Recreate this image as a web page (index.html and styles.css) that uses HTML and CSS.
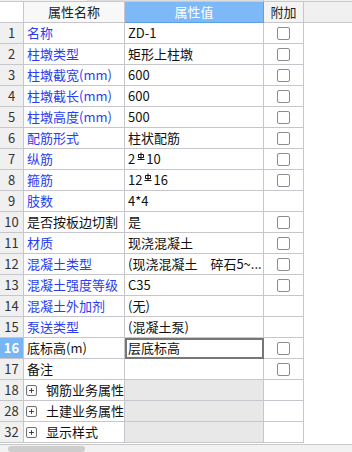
FILE: index.html
```html
<!DOCTYPE html>
<html>
<head>
<meta charset="utf-8">
<link rel="stylesheet" href="styles.css">
</head>
<body>
<div class="app">
  <div class="topstrip"><span class="ts-a"></span><span class="ts-b"></span><span class="ts-c"></span></div>
  <div class="grid">
    <div class="row head">
      <div class="c num hnum"></div>
      <div class="c name hname">属性名称</div>
      <div class="c val hval">属性值</div>
      <div class="c add hadd">附加</div>
      <div class="fill hfill"></div>
    </div>
    <div class="row"><div class="c num">1</div><div class="c name blue">名称</div><div class="c val">ZD-1</div><div class="c add"><span class="cb"></span></div><div class="fill"></div></div>
    <div class="row"><div class="c num">2</div><div class="c name blue">柱墩类型</div><div class="c val">矩形上柱墩</div><div class="c add"><span class="cb"></span></div><div class="fill"></div></div>
    <div class="row"><div class="c num">3</div><div class="c name blue">柱墩截宽(mm)</div><div class="c val">600</div><div class="c add"><span class="cb"></span></div><div class="fill"></div></div>
    <div class="row"><div class="c num">4</div><div class="c name blue">柱墩截长(mm)</div><div class="c val">600</div><div class="c add"><span class="cb"></span></div><div class="fill"></div></div>
    <div class="row"><div class="c num">5</div><div class="c name blue">柱墩高度(mm)</div><div class="c val">500</div><div class="c add"><span class="cb"></span></div><div class="fill"></div></div>
    <div class="row"><div class="c num">6</div><div class="c name blue">配筋形式</div><div class="c val">柱状配筋</div><div class="c add"><span class="cb"></span></div><div class="fill"></div></div>
    <div class="row"><div class="c num">7</div><div class="c name blue">纵筋</div><div class="c val">2<svg class="rb" width="8" height="9" viewBox="0 0 8 9"><path d="M4 0.5V7.5M1.5 2.5H6.5V5.5H1.5Z M0.5 7.5H7.5" fill="none" stroke="#111" stroke-width="1"/></svg>10</div><div class="c add"><span class="cb"></span></div><div class="fill"></div></div>
    <div class="row"><div class="c num">8</div><div class="c name blue">箍筋</div><div class="c val">12<svg class="rb" width="8" height="9" viewBox="0 0 8 9"><path d="M4 0.5V7.5M1.5 2.5H6.5V5.5H1.5Z M0.5 7.5H7.5" fill="none" stroke="#111" stroke-width="1"/></svg>16</div><div class="c add"><span class="cb"></span></div><div class="fill"></div></div>
    <div class="row"><div class="c num">9</div><div class="c name blue">肢数</div><div class="c val">4*4</div><div class="c add"></div><div class="fill"></div></div>
    <div class="row"><div class="c num">10</div><div class="c name">是否按板边切割</div><div class="c val">是</div><div class="c add"><span class="cb"></span></div><div class="fill"></div></div>
    <div class="row"><div class="c num">11</div><div class="c name blue">材质</div><div class="c val">现浇混凝土</div><div class="c add"><span class="cb"></span></div><div class="fill"></div></div>
    <div class="row"><div class="c num">12</div><div class="c name blue">混凝土类型</div><div class="c val">(现浇混凝土　碎石5~...</div><div class="c add"><span class="cb"></span></div><div class="fill"></div></div>
    <div class="row"><div class="c num">13</div><div class="c name blue">混凝土强度等级</div><div class="c val">C35</div><div class="c add"><span class="cb"></span></div><div class="fill"></div></div>
    <div class="row"><div class="c num">14</div><div class="c name blue">混凝土外加剂</div><div class="c val">(无)</div><div class="c add"></div><div class="fill"></div></div>
    <div class="row"><div class="c num">15</div><div class="c name blue">泵送类型</div><div class="c val">(混凝土泵)</div><div class="c add"></div><div class="fill"></div></div>
    <div class="row"><div class="c num sel">16</div><div class="c name">底标高(m)</div><div class="c val edit">层底标高</div><div class="c add"><span class="cb"></span></div><div class="fill"></div></div>
    <div class="row"><div class="c num">17</div><div class="c name">备注</div><div class="c val"></div><div class="c add"><span class="cb"></span></div><div class="fill"></div></div>
    <div class="row"><div class="c num">18</div><div class="c name"><span class="exp"><svg width="11" height="11" viewBox="0 0 11 11"><path d="M5.5 2.5V8.5M2.5 5.5H8.5" stroke="#222" stroke-width="1"/></svg></span>钢筋业务属性</div><div class="c val grp"></div><div class="c add"></div><div class="fill"></div></div>
    <div class="row"><div class="c num">28</div><div class="c name"><span class="exp"><svg width="11" height="11" viewBox="0 0 11 11"><path d="M5.5 2.5V8.5M2.5 5.5H8.5" stroke="#222" stroke-width="1"/></svg></span>土建业务属性</div><div class="c val grp"></div><div class="c add"></div><div class="fill"></div></div>
    <div class="row"><div class="c num">32</div><div class="c name"><span class="exp"><svg width="11" height="11" viewBox="0 0 11 11"><path d="M5.5 2.5V8.5M2.5 5.5H8.5" stroke="#222" stroke-width="1"/></svg></span>显示样式</div><div class="c val grp"></div><div class="c add"></div><div class="fill"></div></div>
  </div>
  <div class="gap"></div>
  <div class="hscroll"><span class="thumb"></span></div>
</div>
</body>
</html>
```

FILE: styles.css
```css
html, body {
  margin: 0;
  padding: 0;
  background: #ffffff;
}
.app {
  width: 352px;
  height: 452px;
  overflow: hidden;
  font-family: "Noto Sans CJK SC", "Microsoft YaHei", "Noto Sans", sans-serif;
  font-size: 13px;
  color: #111;
  display: flex;
  flex-direction: column;
}
.topstrip {
  height: 3px;
  border-bottom: 1px solid #c9c9cf;
  display: flex;
  background: #f0f0f0;
}
.ts-a { width: 87px; }
.ts-b { width: 176px; background: #dcdcdc; border-right: 1px solid #c4c4c4; }
.ts-c { flex: 1; }
.grid {
  display: flex;
  flex-direction: column;
}
.row {
  display: grid;
  grid-template-columns: 24px 101px 139px 40px 1fr;
  height: 21px;
}
.c {
  box-sizing: border-box;
  height: 21px;
  border-right: 1px solid #c6c6cc;
  border-bottom: 1px solid #c6c6cc;
  line-height: 20px;
  white-space: nowrap;
  overflow: hidden;
}
.fill {
  background: #ffffff;
}
.num {
  background: #f0f0f0;
  color: #333;
  text-align: center;
  font-size: 13px;
}
.num.sel {
  background: #78b5f5;
  color: #ffffff;
  font-weight: bold;
}
.name {
  padding-left: 3px;
  display: flex;
  align-items: center;
}
.name.blue {
  color: #2a3df0;
}
.val {
  padding-left: 3px;
  display: flex;
  align-items: center;
}
.val.grp {
  background: #e8e8e8;
}
.val.edit {
  outline: 2px solid #777777;
  outline-offset: -2px;
}
.add {
  display: flex;
  align-items: center;
  justify-content: center;
}
.cb {
  box-sizing: border-box;
  width: 13px;
  height: 13px;
  border: 1px solid #8c8c8c;
  border-radius: 2px;
  background: #fff;
  margin-left: -1px;
}
.rb {
  margin: 0 1px 0 2px;
  position: relative;
  top: -3px;
}
.exp {
  box-sizing: border-box;
  width: 11px;
  height: 11px;
  border: 1px solid #707070;
  border-radius: 2px;
  margin-left: -1px;
  margin-right: 9px;
  display: flex;
  align-items: center;
  justify-content: center;
  background: #fafafa;
}
.exp svg {
  width: 9px;
  height: 9px;
}
.head .c {
  color: #222;
}
.hnum {
  background: #ffffff;
}
.hname {
  background: #f8f8f8;
  justify-content: center;
  padding-left: 0;
}
.hval {
  background: #7db9f7;
  color: #ffffff !important;
  justify-content: center;
  padding-left: 0;
  border-right-color: #5f9fe6;
  border-bottom-color: #5f9fe6;
}
.hadd {
  background: #f4f4f4;
}
.hfill {
  background: #f0f0f0;
  border-bottom: 1px solid #c6c6cc;
}
.gap {
  height: 2px;
}
.hscroll {
  flex: 1;
  border-top: 1px solid #c8c8c8;
  background: #f2f2f2;
  padding: 1px 0 0 8px;
}
.thumb {
  display: block;
  width: 77px;
  height: 6px;
  background: #cdcdcd;
  border-radius: 3px;
}
```
